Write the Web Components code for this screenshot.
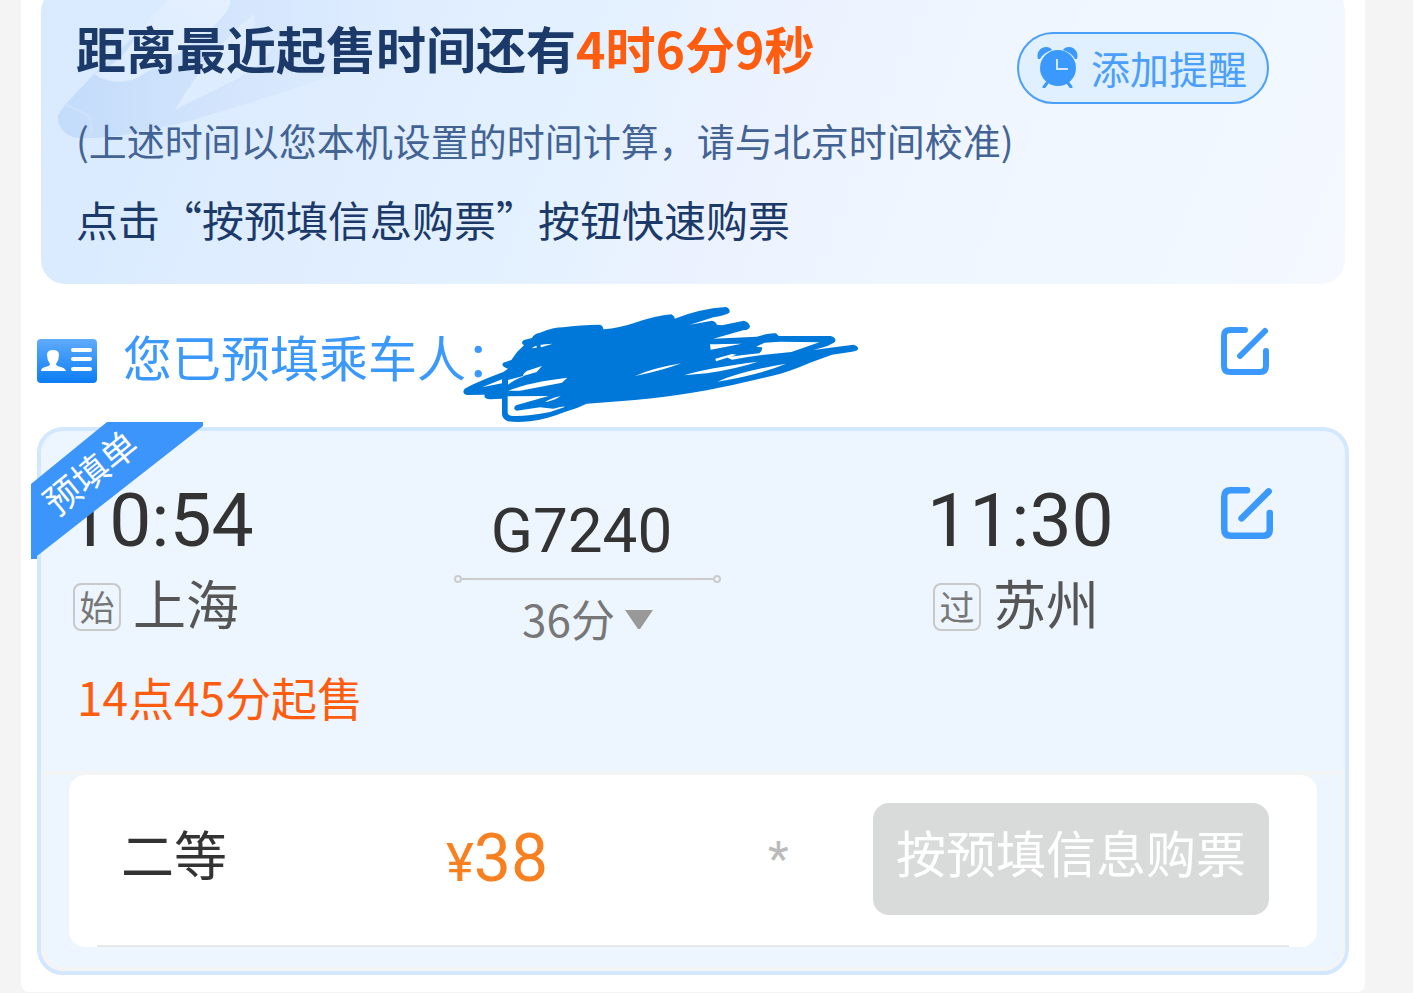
<!DOCTYPE html>
<html lang="zh-CN">
<head>
<meta charset="utf-8">
<meta name="viewport" content="width=device-width, initial-scale=1">
<title>预填单</title>
<style>
  body {
    margin: 0;
    display: flow-root;
    background: #f4f4f4;
    color: #333;
    font-family: "Noto Sans CJK SC", "Noto Sans", sans-serif;
  }
</style>
</head>
<body>
<booking-sheet>
  <sale-banner>
    <span slot="title">距离最近起售时间还有</span>
    <span slot="countdown">4时6分9秒</span>
    <span slot="note">(上述时间以您本机设置的时间计算，请与北京时间校准)</span>
    <span slot="tip">点击“按预填信息购票”按钮快速购票</span>
    <remind-button slot="action">添加提醒</remind-button>
  </sale-banner>
  <passenger-row>您已预填乘车人：</passenger-row>
  <train-card>
    <corner-ribbon slot="ribbon">预填单</corner-ribbon>
    <station-stop slot="from" time="10:54" kind="始">上海</station-stop>
    <train-route slot="route" code="G7240">36分</train-route>
    <station-stop slot="to" time="11:30" kind="过">苏州</station-stop>
    <span slot="sale">14点45分起售</span>
    <seat-row slot="seats" price="38" left="*">二等</seat-row>
  </train-card>
</booking-sheet>

<script>
const define = (name, html) => customElements.define(name, class extends HTMLElement {
  constructor() {
    super();
    this.attachShadow({ mode: 'open' }).innerHTML = html;
  }
  connectedCallback() {
    this.shadowRoot.querySelectorAll('[data-attr]').forEach(el => {
      el.textContent = this.getAttribute(el.dataset.attr) || '';
    });
  }
});

define('booking-sheet', `
<style>
  :host {
    display: block;
    margin: -12px 48px 0 21px;
    padding-bottom: 17px;
    background: #fff;
    border-radius: 0 0 8px 8px;
  }
</style>
<slot></slot>`);

define('sale-banner', `
<style>
  :host {
    display: block;
    position: relative;
    overflow: hidden;
    margin: 0 20px;
    padding: 29px 76px 35px 35px;
    border-radius: 24px;
    color: #1b3a69;
    background: linear-gradient(112deg, #d8eaff 0%, #dfedff 24%, #e4f1ff 42%, #ebf2ff 52%, #eff6ff 68%, #f0f7ff 86%, #f5f8ff 100%);
  }
  .art { position: absolute; left: 0; top: -8px; }
  header { position: relative; display: flex; justify-content: space-between; align-items: flex-start; }
  h1 { margin: 0; font-size: 50px; line-height: 60px; font-weight: 700; white-space: nowrap; }
  .count { color: #fe5d10; }
  ::slotted([slot=action]) { margin-top: 15px; }
  p { position: relative; margin: 0; line-height: 60px; white-space: nowrap; }
  .note { margin-top: 6px; font-size: 38px; color: #436394; }
  .tip { margin-top: 19px; font-size: 42px; }
</style>
<svg class="art" width="520" height="305" viewBox="0 0 520 305" aria-hidden="true">
  <defs>
    <linearGradient id="arm" x1="0" y1="0" x2="1" y2="0">
      <stop offset="0" stop-color="#c2dcfa"/><stop offset=".35" stop-color="#d2e4fc"/><stop offset="1" stop-color="#dfedff" stop-opacity="0"/>
    </linearGradient>
    <linearGradient id="palm" x1="0" y1="1" x2="1" y2="0">
      <stop offset="0" stop-color="#dcebff"/><stop offset="1" stop-color="#e4f0ff"/>
    </linearGradient>
  </defs>
  <path d="M53 94C36 112 20 128 17 136C16 145 22 155 36 158C70 160 110 150 152 140C240 114 330 84 400 52L455 20V0H150L100 50Z" fill="url(#arm)"/>
  <path d="M53 94C66 103 82 104 96 98C132 77 178 50 189 25V0H148C126 20 106 40 92 62C78 82 64 90 53 94Z" fill="url(#palm)"/>
  <path d="M134 130C158 90 180 62 212 34C216 42 214 52 206 64C224 56 236 64 226 76C204 100 166 112 134 130Z" fill="#deecff"/>
  <path d="M24 124L44 134Q52 138 50 154" fill="none" stroke="#cfe2fb" stroke-width="2"/>
</svg>
<header>
  <h1><slot name="title"></slot><span class="count"><slot name="countdown"></slot></span></h1>
  <slot name="action"></slot>
</header>
<p class="note"><slot name="note"></slot></p>
<p class="tip"><slot name="tip"></slot></p>`);

define('remind-button', `
<style>
  :host { display: block; }
  button {
    box-sizing: border-box;
    display: flex;
    align-items: center;
    gap: 12px;
    height: 72px;
    padding: 0 20px 2px 18px;
    border: 2px solid #4a9ffb;
    border-radius: 36px;
    background: #e1f0ff;
    color: #4a9ffb;
    font: 39px/60px "Noto Sans CJK SC", sans-serif;
    white-space: nowrap;
  }
</style>
<button type="button">
  <svg width="42" height="42" viewBox="0 0 42 42" aria-hidden="true">
    <g fill="#3b99fd">
      <path d="M1 13C-1 7 3 1 9 1C12 1 14 2 15 4C9 6 5 9 3 13Z"/>
      <path d="M40 13C42 7 38 1 32 1C29 1 27 2 26 4C32 6 36 9 38 13Z"/>
      <circle cx="21" cy="22" r="18"/>
    </g>
    <path d="M10 37L7 41M31 37L34 41" stroke="#3b99fd" stroke-width="3" stroke-linecap="round"/>
    <path d="M20 13V23H31" fill="none" stroke="#d4e8ff" stroke-width="2"/>
  </svg>
  <slot></slot>
</button>`);

define('edit-button', `
<style>
  :host { display: block; width: 48px; height: 48px; }
  button { display: block; width: 100%; height: 100%; padding: 0; border: 0; background: none; }
  svg { display: block; width: 100%; height: 100%; }
</style>
<button type="button" aria-label="编辑">
  <svg viewBox="0 0 48 48" fill="none" stroke="#3b99fd" stroke-linecap="round">
    <path d="M24 3H9Q3 3 3 9V39Q3 45 9 45H39Q45 45 45 39V24" stroke-width="6"/>
    <path d="M19 29L44 4" stroke-width="6"/>
  </svg>
</button>`);

define('passenger-row', `
<style>
  :host {
    position: relative;
    display: flex;
    align-items: flex-start;
    padding: 43px 96px 0 16px;
    height: 100px;
    color: #3b99fd;
  }
  .card { flex: none; margin-top: 12px; }
  .label { margin: 0 auto 0 26px; font-size: 49px; line-height: 58px; white-space: nowrap; }
  .ink { position: absolute; left: 419px; top: 10px; }
</style>
<svg class="card" width="60" height="44" viewBox="0 0 60 44" aria-hidden="true">
  <defs><linearGradient id="g" x1="0" y1="0" x2="0" y2="1"><stop offset="0" stop-color="#5fabfb"/><stop offset="1" stop-color="#0c7df5"/></linearGradient></defs>
  <rect width="60" height="44" rx="4" fill="url(#g)"/>
  <path d="M4 32Q4 29 8 28Q13 27 13 25Q10 21 10 16Q10 11 16 11Q22 11 22 16Q22 21 19 25Q19 27 24 28Q28 29 29 32Z" fill="#fff"/>
  <path d="M36 11H53M36 20H53M36 30H53" stroke="#fff" stroke-width="4" stroke-linecap="round"/>
</svg>
<span class="label"><slot></slot></span>
<edit-button></edit-button>
<svg class="ink" width="440" height="140" viewBox="0 0 1320 420" aria-hidden="true">
  <path fill="#0078d9" d="M74 284Q110 264 190 234L204 224Q180 216 190 206L214 198Q230 172 252 154Q240 146 252 138L276 132Q280 120 300 116Q340 100 370 100Q420 92 480 92Q490 96 490 106Q540 102 580 88Q650 64 694 61Q704 66 704 74Q780 44 858 39Q872 44 868 56Q860 62 820 70L750 92L816 80Q830 84 830 92L846 94L912 80Q928 84 930 98Q926 108 912 108L820 134L950 128Q990 116 1008 118L1016 126H1172Q1188 130 1186 142Q1180 150 1150 160L1120 168L1240 152Q1256 156 1254 166Q1250 172 1236 173L1176 182L1110 206Q1050 232 1010 242Q900 270 800 289Q640 318 440 329Q410 344 374 354Q320 376 270 382Q230 386 204 382Q186 376 186 360V314L150 316Q130 314 134 302L80 303Q64 298 74 284Z"/>
  <path fill="#fff" d="M126 280L186 256V268ZM204 272Q230 252 250 248Q246 240 262 230L306 216L290 234L250 246L204 258ZM204 290Q270 264 382 251Q370 262 366 266L240 290ZM203 307L326 306L228 334Q216 344 230 350L300 340L340 344Q380 334 372 340L330 354Q260 368 216 366Q204 364 203 356ZM316 324Q330 314 362 306Q350 316 320 324ZM276 162Q290 150 338 149Q310 160 276 163ZM585 246Q640 222 724 208Q660 232 585 246ZM810 151Q850 149 905 149Q860 158 812 167ZM826 194L876 180L890 182L828 202ZM860 190Q900 184 958 178Q968 172 966 160L948 158L974 146L1020 143L1138 145L1054 174Q960 182 876 197ZM732 244Q800 222 954 203Q890 224 800 238ZM832 263Q900 232 1038 209Q960 242 832 263Z"/>
  <path fill="#0078d9" d="M290 152H302V163H290Z"/>
</svg>`);

define('corner-ribbon', `
<style>
  :host { display: block; width: 172px; height: 137px; position: relative; color: #fff; }
  svg { display: block; }
  span {
    position: absolute;
    left: 0;
    top: 22px;
    width: 116px;
    text-align: center;
    font-size: 36px;
    line-height: 54px;
    white-space: nowrap;
    transform: rotate(-39deg);
  }
</style>
<svg width="172" height="137" viewBox="0 0 172 137" aria-hidden="true"><path d="M0 62L76 0H172V4L6 134V137H0Z" fill="#3b95fa"/></svg>
<span><slot></slot></span>`);

define('station-stop', `
<style>
  :host { display: block; white-space: nowrap; }
  time { display: block; margin-left: -6px; font: 75px/90px Roboto, sans-serif; color: #333; }
  div { display: flex; align-items: center; gap: 12px; margin-top: 6px; font-size: 53px; color: #555; }
  .name { margin-bottom: 10px; line-height: 62px; }
  .kind {
    box-sizing: border-box;
    width: 48px;
    height: 48px;
    border: 2px solid #c8c9c8;
    border-radius: 8px;
    font-size: 35px;
    line-height: 42px;
    text-align: center;
    color: #777;
  }
</style>
<time data-attr="time"></time>
<div><span class="kind" data-attr="kind"></span><span class="name"><slot></slot></span></div>`);

define('train-route', `
<style>
  :host { display: block; width: 267px; white-space: nowrap; }
  .code { text-align: center; margin: 16px 12px 0 0; font: 62px/80px Roboto, sans-serif; color: #333; }
  .line { display: block; width: 100%; height: 8px; margin-top: 4px; }
  button {
    display: flex;
    align-items: center;
    gap: 10px;
    margin: 5px auto 0;
    padding: 0;
    border: 0;
    background: none;
    color: #777;
    font: 44px/60px "Noto Sans CJK SC", sans-serif;
  }
  .more { margin-top: 4px; }
</style>
<div class="code" data-attr="code"></div>
<svg class="line" viewBox="0 0 267 8" fill="none" stroke="#ccc" stroke-width="2" aria-hidden="true">
  <path d="M7 4H260"/><circle cx="4" cy="4" r="3"/><circle cx="263" cy="4" r="3"/>
</svg>
<button type="button"><slot></slot><svg class="more" width="28" height="20" viewBox="0 0 28 20" aria-hidden="true"><path d="M0 0H28L15 19H13Z" fill="#999"/></svg></button>`);

define('seat-row', `
<style>
  :host {
    position: relative;
    box-sizing: border-box;
    display: grid;
    grid-template-columns: 325fr 322fr 105fr auto;
    align-items: center;
    margin: 0 24px 20px;
    padding: 28px 48px 32px 52px;
    background: #fff;
    border-radius: 16px;
    white-space: nowrap;
    font-size: 53px;
    line-height: 80px;
    color: #333;
  }
  :host::after { content: ""; position: absolute; left: 28px; right: 28px; bottom: 0; height: 2px; background: #e8e7ea; }
  .name { margin-bottom: 12px; }
  .price { margin-top: 4px; font: 66px/80px Roboto, sans-serif; color: #f98021; }
  small { font-size: 53px; }
  .left { font: 48px/80px Roboto, sans-serif; color: #bbb; }
  button {
    box-sizing: border-box;
    height: 112px;
    padding: 0 23px 16px;
    border: 0;
    border-radius: 16px;
    background: #d9dbda;
    color: #fff;
    font: 50px/80px "Noto Sans CJK SC", sans-serif;
  }
</style>
<span class="name"><slot></slot></span>
<span class="price"><small>¥</small><span data-attr="price"></span></span>
<span class="left" data-attr="left"></span>
<button type="button">按预填信息购票</button>`);

define('train-card', `
<style>
  :host {
    display: block;
    position: relative;
    margin: 0 16px;
    border: 4px solid #d3e7ff;
    border-radius: 26px;
    background: #edf5ff;
  }
  ::slotted([slot=ribbon]) { position: absolute; left: -10px; top: -9px; z-index: 1; }
  .trip {
    display: grid;
    grid-template-columns: 381fr 479fr 288fr 52px;
    align-items: start;
    padding: 44px 72px 0 32px;
  }
  edit-button { width: 52px; height: 52px; margin-top: 12px; }
  .sale { margin: 18px 36px 0; font-size: 46px; line-height: 60px; color: #fe5d10; }
  .seats { margin-top: 45px; border: 4px solid #f3f4f4; border-radius: 0 0 22px 22px; }
</style>
<slot name="ribbon"></slot>
<div class="trip">
  <slot name="from"></slot>
  <slot name="route"></slot>
  <slot name="to"></slot>
  <edit-button></edit-button>
</div>
<div class="sale"><slot name="sale"></slot></div>
<div class="seats"><slot name="seats"></slot></div>`);
</script>
</body>
</html>
